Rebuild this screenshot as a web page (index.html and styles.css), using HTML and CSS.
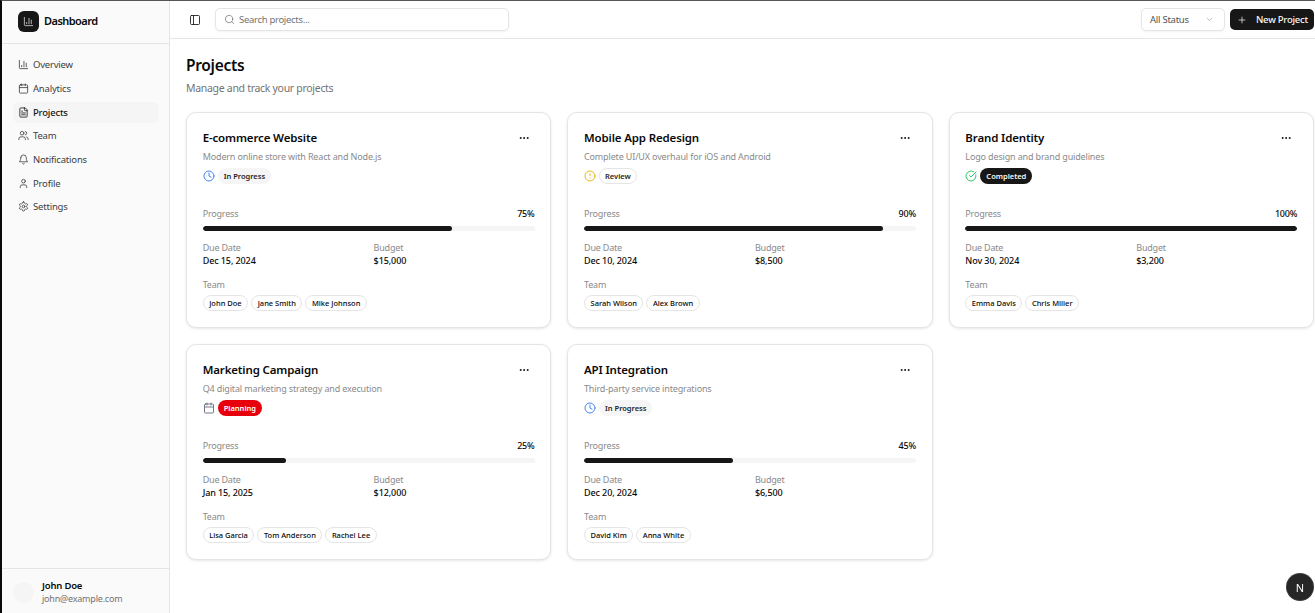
FILE: index.html
```html
<!DOCTYPE html>
<html lang="en"><head>
<title>Dashboard - Projects</title>
<meta name="viewport" content="width=device-width, initial-scale=1">
<link rel="stylesheet" href="styles.css">
</head><body>
<svg class="sprite" xmlns="http://www.w3.org/2000/svg">
  <symbol id="i-chart" viewBox="0 0 24 24"><path d="M3 3v16a2 2 0 0 0 2 2h16"/><path d="M18 17V9"/><path d="M13 17V5"/><path d="M8 17v-3"/></symbol>
  <symbol id="i-calendar" viewBox="0 0 24 24"><path d="M8 2v4"/><path d="M16 2v4"/><rect x="3" y="4" width="18" height="18" rx="2"/><path d="M3 10h18"/></symbol>
  <symbol id="i-file" viewBox="0 0 24 24"><path d="M15 2H6a2 2 0 0 0-2 2v16a2 2 0 0 0 2 2h12a2 2 0 0 0 2-2V7Z"/><path d="M14 2v4a2 2 0 0 0 2 2h4"/><path d="M10 9H8"/><path d="M16 13H8"/><path d="M16 17H8"/></symbol>
  <symbol id="i-users" viewBox="0 0 24 24"><path d="M16 21v-2a4 4 0 0 0-4-4H6a4 4 0 0 0-4 4v2"/><circle cx="9" cy="7" r="4"/><path d="M22 21v-2a4 4 0 0 0-3-3.87"/><path d="M16 3.13a4 4 0 0 1 0 7.75"/></symbol>
  <symbol id="i-bell" viewBox="0 0 24 24"><path d="M6 8a6 6 0 0 1 12 0c0 7 3 9 3 9H3s3-2 3-9"/><path d="M10.3 21a1.94 1.94 0 0 0 3.4 0"/></symbol>
  <symbol id="i-user" viewBox="0 0 24 24"><path d="M19 21v-2a4 4 0 0 0-4-4H9a4 4 0 0 0-4 4v2"/><circle cx="12" cy="7" r="4"/></symbol>
  <symbol id="i-settings" viewBox="0 0 24 24"><path d="M12.22 2h-.44a2 2 0 0 0-2 2v.18a2 2 0 0 1-1 1.73l-.43.25a2 2 0 0 1-2 0l-.15-.08a2 2 0 0 0-2.73.73l-.22.38a2 2 0 0 0 .73 2.73l.15.1a2 2 0 0 1 1 1.72v.51a2 2 0 0 1-1 1.74l-.15.09a2 2 0 0 0-.73 2.73l.22.38a2 2 0 0 0 2.73.73l.15-.08a2 2 0 0 1 2 0l.43.25a2 2 0 0 1 1 1.73V20a2 2 0 0 0 2 2h.44a2 2 0 0 0 2-2v-.18a2 2 0 0 1 1-1.73l.43-.25a2 2 0 0 1 2 0l.15.08a2 2 0 0 0 2.73-.73l.22-.39a2 2 0 0 0-.73-2.73l-.15-.08a2 2 0 0 1-1-1.74v-.5a2 2 0 0 1 1-1.74l.15-.09a2 2 0 0 0 .73-2.73l-.22-.38a2 2 0 0 0-2.73-.73l-.15.08a2 2 0 0 1-2 0l-.43-.25a2 2 0 0 1-1-1.73V4a2 2 0 0 0-2-2z"/><circle cx="12" cy="12" r="3"/></symbol>
  <symbol id="i-panel" viewBox="0 0 24 24"><rect x="3" y="3" width="18" height="18" rx="2"/><path d="M9 3v18"/></symbol>
  <symbol id="i-search" viewBox="0 0 24 24"><circle cx="11" cy="11" r="8"/><path d="m21 21-4.3-4.3"/></symbol>
  <symbol id="i-chevron" viewBox="0 0 24 24"><path d="m6 9 6 6 6-6"/></symbol>
  <symbol id="i-plus" viewBox="0 0 24 24"><path d="M5 12h14"/><path d="M12 5v14"/></symbol>
  <symbol id="i-more" viewBox="0 0 24 24"><circle cx="12" cy="12" r="1"/><circle cx="19" cy="12" r="1"/><circle cx="5" cy="12" r="1"/></symbol>
  <symbol id="i-clock" viewBox="0 0 24 24"><circle cx="12" cy="12" r="10"/><path d="M12 6v6l4 2"/></symbol>
  <symbol id="i-alert" viewBox="0 0 24 24"><circle cx="12" cy="12" r="10"/><path d="M12 8v4"/><path d="M12 16h.01"/></symbol>
  <symbol id="i-check" viewBox="0 0 24 24"><path d="M21.801 10A10 10 0 1 1 17 3.335"/><path d="m9 11 3 3L22 4"/></symbol>
</svg>

<div class="app">
  <aside class="sidebar">
    <div class="brand">
      <span class="brand-logo"><svg class="icon"><use href="#i-chart"/></svg></span>
      <span class="brand-name">Dashboard</span>
    </div>
    <nav class="nav">
      <a class="nav-item"><svg class="icon"><use href="#i-chart"/></svg>Overview</a>
      <a class="nav-item"><svg class="icon"><use href="#i-calendar"/></svg>Analytics</a>
      <a class="nav-item active"><svg class="icon"><use href="#i-file"/></svg>Projects</a>
      <a class="nav-item"><svg class="icon"><use href="#i-users"/></svg>Team</a>
      <a class="nav-item"><svg class="icon"><use href="#i-bell"/></svg>Notifications</a>
      <a class="nav-item"><svg class="icon"><use href="#i-user"/></svg>Profile</a>
      <a class="nav-item"><svg class="icon"><use href="#i-settings"/></svg>Settings</a>
    </nav>
    <div class="account">
      <span class="avatar"></span>
      <div>
        <div class="account-name">John Doe</div>
        <div class="account-mail">john@example.com</div>
      </div>
    </div>
  </aside>

  <div class="main">
    <header class="topbar">
      <svg class="icon toggle"><use href="#i-panel"/></svg>
      <div class="search"><svg class="icon"><use href="#i-search"/></svg><span>Search projects...</span></div>
      <div class="topbar-right">
        <div class="select"><span>All Status</span><svg class="icon"><use href="#i-chevron"/></svg></div>
        <button class="new-btn" type="button"><svg class="icon"><use href="#i-plus"/></svg>New Project</button>
      </div>
    </header>

    <main class="content">
      <h1>Projects</h1>
      <p class="lead">Manage and track your projects</p>

      <div class="grid">
        <article class="card">
          <div class="card-head"><h2>E-commerce Website</h2><svg class="icon more"><use href="#i-more"/></svg></div>
          <p class="desc">Modern online store with React and Node.js</p>
          <div class="status"><svg class="icon blue"><use href="#i-clock"/></svg><span class="badge grey">In Progress</span></div>
          <div class="progress-row"><span>Progress</span><b>75%</b></div>
          <div class="bar"><div class="fill" style="width:75%"></div></div>
          <div class="facts">
            <div><span>Due Date</span><b>Dec 15, 2024</b></div>
            <div><span>Budget</span><b>$15,000</b></div>
          </div>
          <div class="team-label">Team</div>
          <div class="team"><span class="chip">John Doe</span><span class="chip">Jane Smith</span><span class="chip">Mike Johnson</span></div>
        </article>

        <article class="card">
          <div class="card-head"><h2>Mobile App Redesign</h2><svg class="icon more"><use href="#i-more"/></svg></div>
          <p class="desc">Complete UI/UX overhaul for iOS and Android</p>
          <div class="status"><svg class="icon yellow"><use href="#i-alert"/></svg><span class="badge outline">Review</span></div>
          <div class="progress-row"><span>Progress</span><b>90%</b></div>
          <div class="bar"><div class="fill" style="width:90%"></div></div>
          <div class="facts">
            <div><span>Due Date</span><b>Dec 10, 2024</b></div>
            <div><span>Budget</span><b>$8,500</b></div>
          </div>
          <div class="team-label">Team</div>
          <div class="team"><span class="chip">Sarah Wilson</span><span class="chip">Alex Brown</span></div>
        </article>

        <article class="card">
          <div class="card-head"><h2>Brand Identity</h2><svg class="icon more"><use href="#i-more"/></svg></div>
          <p class="desc">Logo design and brand guidelines</p>
          <div class="status"><svg class="icon green"><use href="#i-check"/></svg><span class="badge dark">Completed</span></div>
          <div class="progress-row"><span>Progress</span><b>100%</b></div>
          <div class="bar"><div class="fill" style="width:100%"></div></div>
          <div class="facts">
            <div><span>Due Date</span><b>Nov 30, 2024</b></div>
            <div><span>Budget</span><b>$3,200</b></div>
          </div>
          <div class="team-label">Team</div>
          <div class="team"><span class="chip">Emma Davis</span><span class="chip">Chris Miller</span></div>
        </article>

        <article class="card">
          <div class="card-head"><h2>Marketing Campaign</h2><svg class="icon more"><use href="#i-more"/></svg></div>
          <p class="desc">Q4 digital marketing strategy and execution</p>
          <div class="status"><svg class="icon slate"><use href="#i-calendar"/></svg><span class="badge red">Planning</span></div>
          <div class="progress-row"><span>Progress</span><b>25%</b></div>
          <div class="bar"><div class="fill" style="width:25%"></div></div>
          <div class="facts">
            <div><span>Due Date</span><b>Jan 15, 2025</b></div>
            <div><span>Budget</span><b>$12,000</b></div>
          </div>
          <div class="team-label">Team</div>
          <div class="team"><span class="chip">Lisa Garcia</span><span class="chip">Tom Anderson</span><span class="chip">Rachel Lee</span></div>
        </article>

        <article class="card">
          <div class="card-head"><h2>API Integration</h2><svg class="icon more"><use href="#i-more"/></svg></div>
          <p class="desc">Third-party service integrations</p>
          <div class="status"><svg class="icon blue"><use href="#i-clock"/></svg><span class="badge grey">In Progress</span></div>
          <div class="progress-row"><span>Progress</span><b>45%</b></div>
          <div class="bar"><div class="fill" style="width:45%"></div></div>
          <div class="facts">
            <div><span>Due Date</span><b>Dec 20, 2024</b></div>
            <div><span>Budget</span><b>$6,500</b></div>
          </div>
          <div class="team-label">Team</div>
          <div class="team"><span class="chip">David Kim</span><span class="chip">Anna White</span></div>
        </article>
      </div>
    </main>
  </div>
</div>

<div class="dev-badge">N</div>
</body></html>
```

FILE: styles.css
```css
* { box-sizing: border-box; }
html, body { height: 100%; }
body { margin: 0; background: #fff; color: #0a0a0a; font-family: "Noto Sans", "Open Sans", sans-serif; font-size: 10px; overflow: hidden; }
.sprite { display: none; }
.icon { width: 12px; height: 12px; flex: none; fill: none; stroke: currentColor; stroke-width: 2; stroke-linecap: round; stroke-linejoin: round; }

.app { display: flex; height: 100%; border-top: 1px solid #555; border-left: 2px solid #0a0a0a; }

/* sidebar */
.sidebar { width: 168px; flex: none; display: flex; flex-direction: column; background: #fafafa; border-right: 1px solid #e5e5e5; }
.brand { height: 43px; flex: none; display: flex; align-items: center; gap: 5px; padding: 0 0 4px 16px; border-bottom: 1px solid #e5e5e5; }
.brand-logo { width: 21px; height: 21px; margin-top: 2px; border-radius: 6px; background: #171717; color: #fafafa; display: flex; align-items: center; justify-content: center; }
.brand-logo .icon { width: 11px; height: 11px; stroke-width: 1.5; }
.brand-name { font-size: 11px; font-weight: 600; letter-spacing: -0.55px; }
.nav { flex: 1; padding: 10.4px 10px 0 11px; }
.nav-item { display: flex; align-items: center; gap: 4px; height: 21px; margin-bottom: 2.67px; padding: 0 5px; border-radius: 6px; color: #404040; font-size: 9.5px; letter-spacing: -0.2px; }
.nav-item .icon { width: 11px; height: 11px; stroke-width: 1.8; }
.nav-item.active { background: #f5f5f5; color: #171717; font-weight: 500; }
.account { height: 45px; flex: none; display: flex; align-items: center; gap: 8px; padding: 2px 13px 0 11px; border-top: 1px solid #e5e5e5; }
.avatar { width: 21px; height: 21px; border-radius: 50%; background: #f5f5f5; flex: none; }
.account-name { font-size: 9.5px; font-weight: 600; line-height: 13px; letter-spacing: -0.2px; }
.account-mail { font-size: 9px; color: #737373; line-height: 13px; letter-spacing: -0.2px; }

/* top bar */
.main { flex: 1; min-width: 0; display: flex; flex-direction: column; }
.topbar { height: 38px; flex: none; display: flex; align-items: center; padding: 0 1px 0 19px; border-bottom: 1px solid #e5e5e5; }
.toggle { width: 12px; height: 12px; color: #171717; stroke-width: 1.7; }
.search { width: 294px; height: 23px; margin-left: 14px; display: flex; align-items: center; gap: 4px; padding: 0 8px; border: 1px solid #e5e5e5; border-radius: 5px; box-shadow: 0 1px 2px rgba(0,0,0,0.05); color: #737373; font-size: 9.5px; letter-spacing: -0.3px; }
.search .icon { width: 11px; height: 11px; stroke-width: 1.6; }
.topbar-right { margin-left: auto; display: flex; align-items: center; gap: 5px; }
.select { width: 84px; height: 23px; display: flex; align-items: center; justify-content: space-between; padding: 0 10px 0 8px; border: 1px solid #e5e5e5; border-radius: 5px; box-shadow: 0 1px 2px rgba(0,0,0,0.05); color: #525252; font-size: 9.5px; letter-spacing: -0.25px; }
.select .icon { width: 9px; height: 9px; color: #a3a3a3; }
.new-btn { width: 84px; height: 21px; display: flex; align-items: center; gap: 9px; padding: 0 0 0 7px; border: none; border-radius: 5px; background: #171717; color: #fafafa; font-family: inherit; font-size: 9.5px; font-weight: 500; letter-spacing: -0.25px; white-space: nowrap; }
.new-btn .icon { width: 10px; height: 10px; stroke-width: 1.7; }

/* content */
.content { flex: 1; padding: 16px 1px 0 16px; }
h1 { margin: 0; font-size: 15.5px; line-height: 20px; font-weight: 600; letter-spacing: -0.3px; }
.lead { margin: 6px 0 16px; font-size: 10.5px; line-height: 15px; color: #737373; letter-spacing: -0.3px; }
.grid { display: grid; grid-template-columns: repeat(3, 1fr); gap: 16px; }
.card { height: 216px; padding: 16px 15.8px 0 15.7px; border: 1px solid #e5e5e5; border-radius: 10px; background: #fff; box-shadow: 0 1px 3px rgba(0,0,0,0.1); }
.card-head { display: flex; align-items: center; justify-content: space-between; height: 17px; }
h2 { margin: 0; font-size: 11.5px; font-weight: 600; letter-spacing: -0.15px; }
.more { width: 12px; height: 12px; margin-right: 5px; }
.desc { margin: 4px 0 0; font-size: 9px; line-height: 13px; color: #8a8a8a; letter-spacing: -0.15px; }
.status { display: flex; align-items: center; gap: 3px; margin-top: 5px; height: 16px; }
.status .icon { width: 12px; height: 12px; stroke-width: 1.9; }
.blue { color: #3b82f6; }
.yellow { color: #eab308; }
.green { color: #22c55e; }
.slate { color: #6b7280; }
.badge { display: inline-flex; align-items: center; height: 16px; padding: 0 5px; border-radius: 8px; border: 1px solid transparent; font-size: 7.5px; font-weight: 600; white-space: nowrap; }
.badge.grey { background: #f5f5f5; color: #262626; }
.badge.outline { border-color: #e5e5e5; color: #262626; }
.badge.dark { background: #171717; color: #fafafa; }
.badge.red { background: #e7000b; color: #fff; }
.progress-row { display: flex; justify-content: space-between; align-items: center; margin-top: 22px; height: 14px; font-size: 9px; color: #8a8a8a; letter-spacing: -0.2px; }
.progress-row b { font-weight: 500; color: #0a0a0a; }
.bar { height: 5px; margin-top: 6px; border-radius: 3px; background: #f5f5f5; overflow: hidden; }
.fill { height: 100%; border-radius: 3px; background: #171717; }
.facts { display: grid; grid-template-columns: 1fr 1fr; gap: 0 10px; margin-top: 10px; }
.facts span { display: block; font-size: 9px; line-height: 13px; color: #8a8a8a; letter-spacing: -0.2px; }
.facts b { display: block; font-size: 9px; line-height: 13px; font-weight: 500; letter-spacing: -0.1px; }
.team-label { margin-top: 11px; font-size: 9px; line-height: 13px; color: #8a8a8a; letter-spacing: -0.2px; }
.team { display: flex; gap: 3px; margin-top: 4px; }
.chip { display: inline-flex; align-items: center; height: 16px; padding: 0 5.5px; border: 1px solid #e5e5e5; border-radius: 8px; font-size: 7.5px; font-weight: 500; white-space: nowrap; }

/* dev indicator */
.dev-badge { position: fixed; right: 2px; bottom: 13px; width: 26px; height: 26px; border-radius: 50%; background: #262626; color: #fff; display: flex; align-items: center; justify-content: center; font-size: 11px; font-weight: 400; box-shadow: 0 0 0 1px #3a3a3a; }
```
